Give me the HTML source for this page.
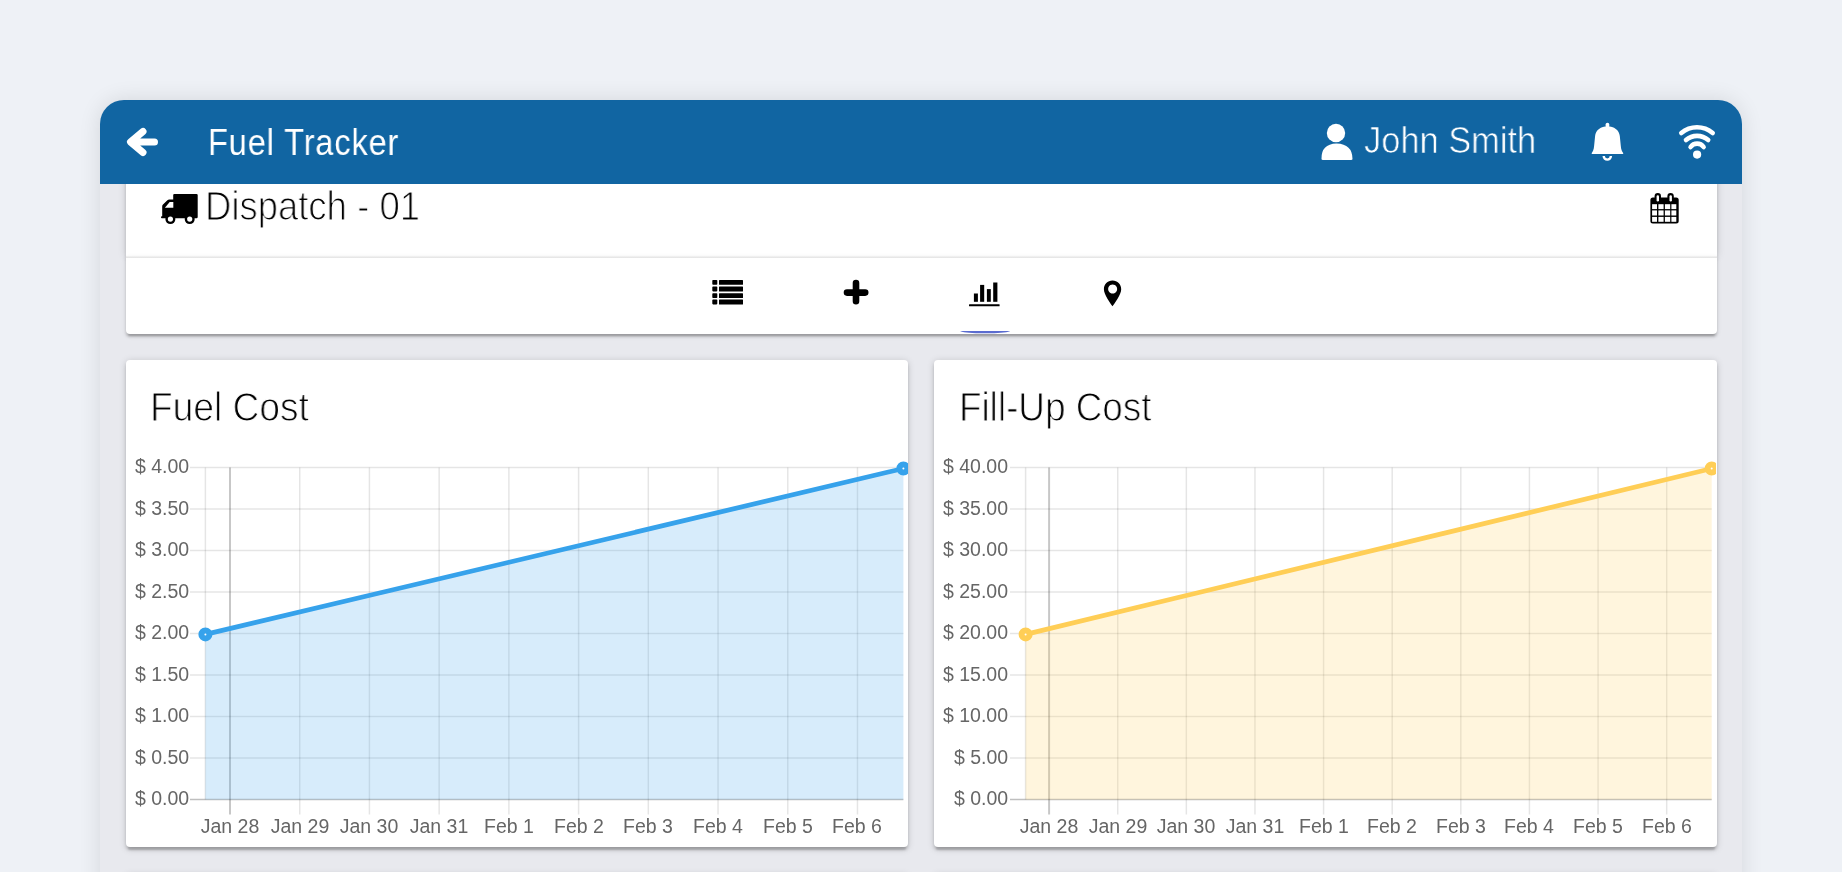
<!DOCTYPE html>
<html><head><meta charset="utf-8">
<style>
html,body{margin:0;padding:0;width:1842px;height:872px;overflow:hidden;background:#eef1f6;font-family:"Liberation Sans",sans-serif;}
.abs{position:absolute;}
#cont{left:100px;top:100px;width:1642px;height:820px;background:#e8e9ee;border-radius:24px 24px 0 0;box-shadow:0 0 22px rgba(0,0,0,0.11);}
#hdr{left:100px;top:100px;width:1642px;height:84px;background:#1165a2;border-radius:24px 24px 0 0;z-index:5;}
.card{background:#fff;border-radius:4px;box-shadow:0 3px 3px 0 rgba(0,0,0,.14),0 4.5px 1.5px -2px rgba(0,0,0,.12),0 1.5px 7.5px 0 rgba(0,0,0,.17);}
.txt{white-space:nowrap;line-height:1;will-change:transform;}
.ylab{position:absolute;will-change:transform;font-size:19.5px;line-height:18px;color:#666;white-space:nowrap;text-align:right;}
.xlab{position:absolute;will-change:transform;width:100px;text-align:center;font-size:19.5px;line-height:18px;color:#666;white-space:nowrap;}
</style></head><body>
<div id="cont" class="abs"></div>

<!-- dispatch card -->
<div class="abs card" style="left:125.8px;top:150px;width:1590.8px;height:106px;border-radius:0;"></div>
<!-- tabs card -->
<div class="abs card" style="left:125.8px;top:257px;width:1590.8px;height:76.5px;border-radius:0 0 4px 4px;box-shadow:0 2.5px 2.5px 0 rgba(0,0,0,.14),0 4px 1.5px -2px rgba(0,0,0,.14),0 1.5px 5px 0 rgba(0,0,0,.12);"></div>
<div class="abs" style="left:125.8px;top:256px;width:1590.8px;height:2px;background:linear-gradient(#f4f4f4,#e2e2e2);"></div>
<!-- chart cards -->
<div class="abs card" style="left:125.8px;top:359.8px;width:782.4px;height:487.2px;"></div>
<div class="abs card" style="left:933.8px;top:359.8px;width:782.8px;height:487.2px;"></div>
<div class="abs card" style="left:125.8px;top:873.5px;width:782.4px;height:400px;"></div>
<div class="abs card" style="left:933.8px;top:873.5px;width:782.8px;height:400px;"></div>

<div id="hdr" class="abs"></div>

<!-- header content -->
<svg class="abs" style="left:100px;top:100px;z-index:6" width="1642" height="84" viewBox="0 0 1642 84">
  <!-- back arrow -->
  <path d="M43 31.5 L30.5 42 L43 52.5 M31 42 L54.5 42" fill="none" stroke="#fff" stroke-width="7" stroke-linecap="round" stroke-linejoin="round"/>
  <!-- user icon -->
  <circle cx="1236" cy="33" r="9.2" fill="#fff"/>
  <path d="M1221.5 59 Q1221 44 1236.5 43.5 Q1252.5 44 1252.5 59 Q1252.5 60 1251 60 L1223 60 Q1221.5 60 1221.5 59 Z" fill="#fff"/>
  <!-- bell -->
  <rect x="1505.6" y="22.8" width="3.7" height="5" rx="1.8" fill="#fff"/>
  <path d="M1507.45 26.2 C1501 26.2 1495.6 30 1495.1 36 L1494.1 46 C1493.9 49.5 1492.6 52 1491.7 53.1 Q1491.3 54 1492.3 54 L1522.6 54 Q1523.6 54 1523.2 53.1 C1522.3 52 1521 49.5 1520.8 46 L1519.8 36 C1519.3 30 1513.9 26.2 1507.45 26.2 Z" fill="#fff"/>
  <path d="M1502.5 56 A4.8 4.8 0 0 0 1512.1 56 L1509.7 56 A2.4 2.4 0 0 1 1504.9 56 Z" fill="#fff"/>
  <!-- wifi -->
  <path d="M1581.3 33 A24.5 24.5 0 0 1 1612.7 33" fill="none" stroke="#fff" stroke-width="4.6" stroke-linecap="round"/>
  <path d="M1586 40.1 A16.8 16.8 0 0 1 1608.2 40.1" fill="none" stroke="#fff" stroke-width="4.6" stroke-linecap="round"/>
  <path d="M1590.6 47 A7.9 7.9 0 0 1 1603.6 47" fill="none" stroke="#fff" stroke-width="4.6" stroke-linecap="round"/>
  <circle cx="1597.1" cy="54.6" r="4.1" fill="#fff"/>
</svg>

<!-- dispatch row -->
<svg class="abs" style="left:155px;top:188px" width="50" height="40" viewBox="155 188 50 40">
  <rect x="173.2" y="193.9" width="24.5" height="24.4" rx="1.2" fill="#000"/>
  <path d="M174 199.4 L169.2 199.4 Q168.2 199.4 167.4 200.2 L163 204.6 Q162.2 205.4 162.2 206.4 L162.2 216.3 L161.8 216.3 Q161 216.3 161 217.3 Q161 218.3 161.8 218.3 L174 218.3 Z" fill="#000"/>
  <path d="M173.3 202 L169.7 202 L164.9 207.7 L173.3 207.7 Z" fill="#fff"/>
  <circle cx="170.4" cy="219.1" r="5" fill="#000"/><circle cx="170.4" cy="219.1" r="2.6" fill="#fff"/>
  <circle cx="189.7" cy="219.1" r="5" fill="#000"/><circle cx="189.7" cy="219.1" r="2.6" fill="#fff"/>
</svg>

<!-- calendar -->
<svg class="abs" style="left:1650px;top:192px" width="30" height="33" viewBox="0 0 30 33">
  <rect x="0.4" y="5.6" width="28.3" height="25.9" rx="2.5" fill="#000"/>
  <g fill="#fff">
    <rect x="2.1" y="12.2" width="4.9" height="4.9"/><rect x="8.4" y="12.2" width="5.2" height="4.9"/><rect x="14.9" y="12.2" width="5.3" height="4.9"/><rect x="21.4" y="12.2" width="4.9" height="4.9"/>
    <rect x="2.1" y="18.4" width="4.9" height="5.1"/><rect x="8.4" y="18.4" width="5.2" height="5.1"/><rect x="14.9" y="18.4" width="5.3" height="5.1"/><rect x="21.4" y="18.4" width="4.9" height="5.1"/>
    <rect x="2.1" y="24.9" width="4.9" height="4.9"/><rect x="8.4" y="24.9" width="5.2" height="4.9"/><rect x="14.9" y="24.9" width="5.3" height="4.9"/><rect x="21.4" y="24.9" width="4.9" height="4.9"/>
  </g>
  <rect x="4.6" y="1" width="6.4" height="10" rx="3.2" fill="#000"/>
  <rect x="17.4" y="1" width="6.4" height="10" rx="3.2" fill="#000"/>
  <rect x="6.6" y="3.2" width="2.4" height="6.2" rx="1.2" fill="#fff"/>
  <rect x="19.5" y="3.2" width="2.4" height="6.2" rx="1.2" fill="#fff"/>
</svg>

<!-- tab icons -->
<svg class="abs" style="left:700px;top:270px" width="440" height="70" viewBox="700 270 440 70">
  <!-- list -->
  <g fill="#000">
    <rect x="712.3" y="280" width="5" height="4.8" rx="0.8"/><rect x="719" y="280" width="24" height="4.8" rx="0.5"/>
    <rect x="712.3" y="286.6" width="5" height="4.8" rx="0.8"/><rect x="719" y="286.6" width="24" height="4.8" rx="0.5"/>
    <rect x="712.3" y="293.2" width="5" height="4.8" rx="0.8"/><rect x="719" y="293.2" width="24" height="4.8" rx="0.5"/>
    <rect x="712.3" y="299.6" width="5" height="4.8" rx="0.8"/><rect x="719" y="299.6" width="24" height="4.8" rx="0.5"/>
  </g>
  <!-- plus -->
  <path d="M856 283 L856 301.2 M847 292.6 L865.2 292.6" fill="none" stroke="#000" stroke-width="6.6" stroke-linecap="round"/>
  <!-- chart -->
  <g fill="#000">
    <rect x="973.9" y="293.5" width="4" height="8.3"/>
    <rect x="980.1" y="284.9" width="4.1" height="16.9"/>
    <rect x="986.9" y="289.1" width="3.9" height="12.7"/>
    <rect x="993.2" y="282.5" width="4.2" height="19.3"/>
    <rect x="969" y="304.2" width="30.6" height="2" rx="0.5"/>
  </g>
  <!-- pin -->
  <path d="M1112.5 280.6 C1107.5 280.6 1103.9 284.4 1103.9 289.2 C1103.9 294.5 1110.5 303.5 1112.5 306.2 C1114.5 303.5 1121.2 294.5 1121.2 289.2 C1121.2 284.4 1117.5 280.6 1112.5 280.6 Z M1112.65 284.5 A4.5 4.5 0 1 1 1112.64 284.5 Z" fill="#000" fill-rule="evenodd"/>
  <!-- indicator -->
  <path d="M960 331 L1010.4 331 C1005 333 999 333.2 985.2 333.2 C971 333.2 965 333 960 331 Z" fill="#5b6cd0"/>
</svg>

<div id="tFT" class="abs txt" style="left:208.49px;top:125.25px;font-size:36.59px;letter-spacing:1.0px;color:#fff;transform:scaleX(0.8884);transform-origin:0 0;z-index:6;">Fuel Tracker</div>
<div id="tJS" class="abs txt" style="left:1364.30px;top:122.46px;font-size:37.37px;letter-spacing:0px;color:#fff;-webkit-text-stroke:0.7px #1165a2;transform:scaleX(0.9212);transform-origin:0 0;z-index:6;">John Smith</div>
<div id="tDP" class="abs txt" style="left:205.38px;top:186.00px;font-size:40.53px;letter-spacing:0px;color:#000;-webkit-text-stroke:1.2px #fff;transform:scaleX(0.9006);transform-origin:0 0;">Dispatch - 01</div>
<div id="tFC" class="abs txt" style="left:150.09px;top:387.00px;font-size:40.92px;letter-spacing:0px;color:#000;-webkit-text-stroke:1.1px #fff;transform:scaleX(0.9073);transform-origin:0 0;">Fuel Cost</div>
<div id="tFU" class="abs txt" style="left:958.71px;top:387.00px;font-size:40.92px;letter-spacing:0px;color:#000;-webkit-text-stroke:1.1px #fff;transform:scaleX(0.9011);transform-origin:0 0;">Fill-Up Cost</div>
<div id="charts">
<svg class="abs" style="left:0;top:0;clip-path:inset(0 934px 0 126px)" width="1842" height="872" viewBox="0 0 1842 872">
<line x1="190" y1="467.50" x2="903.4" y2="467.50" stroke="rgba(0,0,0,0.1)" stroke-width="1.5"/>
<line x1="190" y1="509.00" x2="903.4" y2="509.00" stroke="rgba(0,0,0,0.1)" stroke-width="1.5"/>
<line x1="190" y1="550.50" x2="903.4" y2="550.50" stroke="rgba(0,0,0,0.1)" stroke-width="1.5"/>
<line x1="190" y1="592.00" x2="903.4" y2="592.00" stroke="rgba(0,0,0,0.1)" stroke-width="1.5"/>
<line x1="190" y1="633.50" x2="903.4" y2="633.50" stroke="rgba(0,0,0,0.1)" stroke-width="1.5"/>
<line x1="190" y1="675.00" x2="903.4" y2="675.00" stroke="rgba(0,0,0,0.1)" stroke-width="1.5"/>
<line x1="190" y1="716.50" x2="903.4" y2="716.50" stroke="rgba(0,0,0,0.1)" stroke-width="1.5"/>
<line x1="190" y1="758.00" x2="903.4" y2="758.00" stroke="rgba(0,0,0,0.1)" stroke-width="1.5"/>
<line x1="190" y1="799.50" x2="903.4" y2="799.50" stroke="rgba(0,0,0,0.25)" stroke-width="1.5"/>
<line x1="205.4" y1="467.5" x2="205.4" y2="799.5" stroke="rgba(0,0,0,0.1)" stroke-width="1.5"/>
<line x1="230.00" y1="467.5" x2="230.00" y2="814.5" stroke="rgba(0,0,0,0.22)" stroke-width="2"/>
<line x1="299.72" y1="467.5" x2="299.72" y2="814.5" stroke="rgba(0,0,0,0.1)" stroke-width="1.5"/>
<line x1="369.44" y1="467.5" x2="369.44" y2="814.5" stroke="rgba(0,0,0,0.1)" stroke-width="1.5"/>
<line x1="439.16" y1="467.5" x2="439.16" y2="814.5" stroke="rgba(0,0,0,0.1)" stroke-width="1.5"/>
<line x1="508.88" y1="467.5" x2="508.88" y2="814.5" stroke="rgba(0,0,0,0.1)" stroke-width="1.5"/>
<line x1="578.60" y1="467.5" x2="578.60" y2="814.5" stroke="rgba(0,0,0,0.1)" stroke-width="1.5"/>
<line x1="648.32" y1="467.5" x2="648.32" y2="814.5" stroke="rgba(0,0,0,0.1)" stroke-width="1.5"/>
<line x1="718.04" y1="467.5" x2="718.04" y2="814.5" stroke="rgba(0,0,0,0.1)" stroke-width="1.5"/>
<line x1="787.76" y1="467.5" x2="787.76" y2="814.5" stroke="rgba(0,0,0,0.1)" stroke-width="1.5"/>
<line x1="857.48" y1="467.5" x2="857.48" y2="814.5" stroke="rgba(0,0,0,0.1)" stroke-width="1.5"/>
<polygon points="205.4,799.5 205.4,634.40 903.4,468.5 903.4,799.5" fill="rgba(54,162,235,0.2)"/>
<line x1="205.4" y1="634.40" x2="903.4" y2="468.5" stroke="#36a2eb" stroke-width="4.7"/>
<circle cx="205.4" cy="634.40" r="4.0" fill="#fff" stroke="#36a2eb" stroke-width="6"/>
<circle cx="903.4" cy="468.50" r="4.0" fill="#fff" stroke="#36a2eb" stroke-width="6"/>
</svg>
<div class="ylab" style="right:1653px;top:457.30px">$ 4.00</div>
<div class="ylab" style="right:1653px;top:498.80px">$ 3.50</div>
<div class="ylab" style="right:1653px;top:540.30px">$ 3.00</div>
<div class="ylab" style="right:1653px;top:581.80px">$ 2.50</div>
<div class="ylab" style="right:1653px;top:623.30px">$ 2.00</div>
<div class="ylab" style="right:1653px;top:664.80px">$ 1.50</div>
<div class="ylab" style="right:1653px;top:706.30px">$ 1.00</div>
<div class="ylab" style="right:1653px;top:747.80px">$ 0.50</div>
<div class="ylab" style="right:1653px;top:789.30px">$ 0.00</div>
<div class="xlab" style="left:180.00px;top:816.5px">Jan 28</div>
<div class="xlab" style="left:249.72px;top:816.5px">Jan 29</div>
<div class="xlab" style="left:319.44px;top:816.5px">Jan 30</div>
<div class="xlab" style="left:389.16px;top:816.5px">Jan 31</div>
<div class="xlab" style="left:458.88px;top:816.5px">Feb 1</div>
<div class="xlab" style="left:528.60px;top:816.5px">Feb 2</div>
<div class="xlab" style="left:598.32px;top:816.5px">Feb 3</div>
<div class="xlab" style="left:668.04px;top:816.5px">Feb 4</div>
<div class="xlab" style="left:737.76px;top:816.5px">Feb 5</div>
<div class="xlab" style="left:807.48px;top:816.5px">Feb 6</div>
<svg class="abs" style="left:0;top:0;clip-path:inset(0 126px 0 934px)" width="1842" height="872" viewBox="0 0 1842 872">
<line x1="1010" y1="467.50" x2="1711.7" y2="467.50" stroke="rgba(0,0,0,0.1)" stroke-width="1.5"/>
<line x1="1010" y1="509.00" x2="1711.7" y2="509.00" stroke="rgba(0,0,0,0.1)" stroke-width="1.5"/>
<line x1="1010" y1="550.50" x2="1711.7" y2="550.50" stroke="rgba(0,0,0,0.1)" stroke-width="1.5"/>
<line x1="1010" y1="592.00" x2="1711.7" y2="592.00" stroke="rgba(0,0,0,0.1)" stroke-width="1.5"/>
<line x1="1010" y1="633.50" x2="1711.7" y2="633.50" stroke="rgba(0,0,0,0.1)" stroke-width="1.5"/>
<line x1="1010" y1="675.00" x2="1711.7" y2="675.00" stroke="rgba(0,0,0,0.1)" stroke-width="1.5"/>
<line x1="1010" y1="716.50" x2="1711.7" y2="716.50" stroke="rgba(0,0,0,0.1)" stroke-width="1.5"/>
<line x1="1010" y1="758.00" x2="1711.7" y2="758.00" stroke="rgba(0,0,0,0.1)" stroke-width="1.5"/>
<line x1="1010" y1="799.50" x2="1711.7" y2="799.50" stroke="rgba(0,0,0,0.25)" stroke-width="1.5"/>
<line x1="1025.6" y1="467.5" x2="1025.6" y2="799.5" stroke="rgba(0,0,0,0.1)" stroke-width="1.5"/>
<line x1="1049.10" y1="467.5" x2="1049.10" y2="814.5" stroke="rgba(0,0,0,0.22)" stroke-width="2"/>
<line x1="1117.72" y1="467.5" x2="1117.72" y2="814.5" stroke="rgba(0,0,0,0.1)" stroke-width="1.5"/>
<line x1="1186.34" y1="467.5" x2="1186.34" y2="814.5" stroke="rgba(0,0,0,0.1)" stroke-width="1.5"/>
<line x1="1254.96" y1="467.5" x2="1254.96" y2="814.5" stroke="rgba(0,0,0,0.1)" stroke-width="1.5"/>
<line x1="1323.58" y1="467.5" x2="1323.58" y2="814.5" stroke="rgba(0,0,0,0.1)" stroke-width="1.5"/>
<line x1="1392.20" y1="467.5" x2="1392.20" y2="814.5" stroke="rgba(0,0,0,0.1)" stroke-width="1.5"/>
<line x1="1460.82" y1="467.5" x2="1460.82" y2="814.5" stroke="rgba(0,0,0,0.1)" stroke-width="1.5"/>
<line x1="1529.44" y1="467.5" x2="1529.44" y2="814.5" stroke="rgba(0,0,0,0.1)" stroke-width="1.5"/>
<line x1="1598.06" y1="467.5" x2="1598.06" y2="814.5" stroke="rgba(0,0,0,0.1)" stroke-width="1.5"/>
<line x1="1666.68" y1="467.5" x2="1666.68" y2="814.5" stroke="rgba(0,0,0,0.1)" stroke-width="1.5"/>
<polygon points="1025.6,799.5 1025.6,634.40 1711.7,468.5 1711.7,799.5" fill="rgba(255,206,86,0.2)"/>
<line x1="1025.6" y1="634.40" x2="1711.7" y2="468.5" stroke="#ffce56" stroke-width="4.7"/>
<circle cx="1025.6" cy="634.40" r="4.0" fill="#fff" stroke="#ffce56" stroke-width="6"/>
<circle cx="1711.7" cy="468.50" r="4.0" fill="#fff" stroke="#ffce56" stroke-width="6"/>
</svg>
<div class="ylab" style="right:833.5px;top:457.30px">$ 40.00</div>
<div class="ylab" style="right:833.5px;top:498.80px">$ 35.00</div>
<div class="ylab" style="right:833.5px;top:540.30px">$ 30.00</div>
<div class="ylab" style="right:833.5px;top:581.80px">$ 25.00</div>
<div class="ylab" style="right:833.5px;top:623.30px">$ 20.00</div>
<div class="ylab" style="right:833.5px;top:664.80px">$ 15.00</div>
<div class="ylab" style="right:833.5px;top:706.30px">$ 10.00</div>
<div class="ylab" style="right:833.5px;top:747.80px">$ 5.00</div>
<div class="ylab" style="right:833.5px;top:789.30px">$ 0.00</div>
<div class="xlab" style="left:999.10px;top:816.5px">Jan 28</div>
<div class="xlab" style="left:1067.72px;top:816.5px">Jan 29</div>
<div class="xlab" style="left:1136.34px;top:816.5px">Jan 30</div>
<div class="xlab" style="left:1204.96px;top:816.5px">Jan 31</div>
<div class="xlab" style="left:1273.58px;top:816.5px">Feb 1</div>
<div class="xlab" style="left:1342.20px;top:816.5px">Feb 2</div>
<div class="xlab" style="left:1410.82px;top:816.5px">Feb 3</div>
<div class="xlab" style="left:1479.44px;top:816.5px">Feb 4</div>
<div class="xlab" style="left:1548.06px;top:816.5px">Feb 5</div>
<div class="xlab" style="left:1616.68px;top:816.5px">Feb 6</div>

</div><!--/charts-->
</body></html>
